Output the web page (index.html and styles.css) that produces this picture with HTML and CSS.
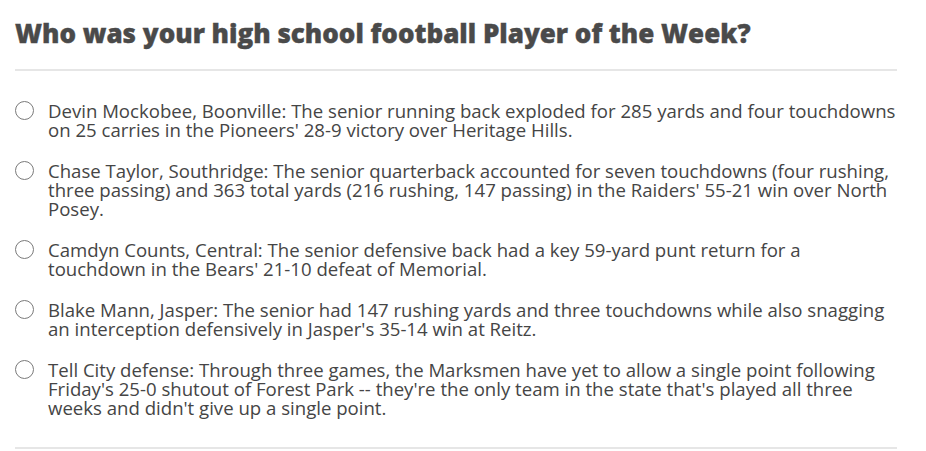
FILE: index.html
```html
<!DOCTYPE html>
<html lang="en">
<head>
    <meta charset="UTF-8">
    <meta name="viewport" content="width=device-width, initial-scale=1.0">
    <title>Player of the Week Poll</title>
    <link rel="stylesheet" href="styles.css">
</head>
<body>
    <div class="poll">
        <h2 class="poll-question">Who was your high school football Player of the Week?</h2>

        <!-- Choix du sondage -->
        <ul class="poll-options">
            <li>
                <label class="option">
                    <input type="radio" name="potw" value="1">
                    <span>Devin Mockobee, Boonville: The senior running back exploded for 285 yards and four touchdowns on 25 carries in the Pioneers' 28-9 victory over Heritage Hills.</span>
                </label>
            </li>
            <li>
                <label class="option">
                    <input type="radio" name="potw" value="2">
                    <span>Chase Taylor, Southridge: The senior quarterback accounted for seven touchdowns (four rushing, three passing) and 363 total yards (216 rushing, 147 passing) in the Raiders' 55-21 win over North Posey.</span>
                </label>
            </li>
            <li>
                <label class="option">
                    <input type="radio" name="potw" value="3">
                    <span>Camdyn Counts, Central: The senior defensive back had a key 59-yard punt return for a touchdown in the Bears' 21-10 defeat of Memorial.</span>
                </label>
            </li>
            <li>
                <label class="option">
                    <input type="radio" name="potw" value="4">
                    <span>Blake Mann, Jasper: The senior had 147 rushing yards and three touchdowns while also snagging an interception defensively in Jasper's 35-14 win at Reitz.</span>
                </label>
            </li>
            <li>
                <label class="option">
                    <input type="radio" name="potw" value="5">
                    <span>Tell City defense: Through three games, the Marksmen have yet to allow a single point following Friday's 25-0 shutout of Forest Park -- they're the only team in the state that's played all three weeks and didn't give up a single point.</span>
                </label>
            </li>
        </ul>
    </div>
</body>
</html>
```

FILE: styles.css
```css
body {
    margin: 0;
    padding: 0;
    background-color: #fff;
    font-family: "Open Sans", "Noto Sans", Arial, sans-serif;
    color: #454545;
}
.poll {
    width: 882px;
    padding: 0 15px;
}
.poll-question {
    margin: 0;
    padding: 17px 0 19px;
    font-family: "Open Sans", sans-serif;
    font-weight: 800;
    font-size: 26px;
    line-height: 33px;
    color: #4a4a4a;
    -webkit-text-stroke: 0.4px #4a4a4a;
    border-bottom: 2px solid #e6e6e6;
}
.poll-options {
    list-style: none;
    margin: 0;
    padding: 30px 0 30px;
    border-bottom: 2px solid #e6e6e6;
}
.poll-options li {
    margin-bottom: 22px;
}
.poll-options li:last-child {
    margin-bottom: 0;
}
.option {
    display: flex;
    align-items: flex-start;
    gap: 14px;
    font-size: 18.6px;
    line-height: 19px;
    cursor: pointer;
}
.option input {
    flex: none;
    width: 19px;
    height: 19px;
    margin: 0;
    appearance: none;
    border: 1px solid #7a7a7a;
    border-radius: 50%;
    background: #fff;
}
.option input:checked {
    background: radial-gradient(#555 40%, #fff 45%);
}
```
